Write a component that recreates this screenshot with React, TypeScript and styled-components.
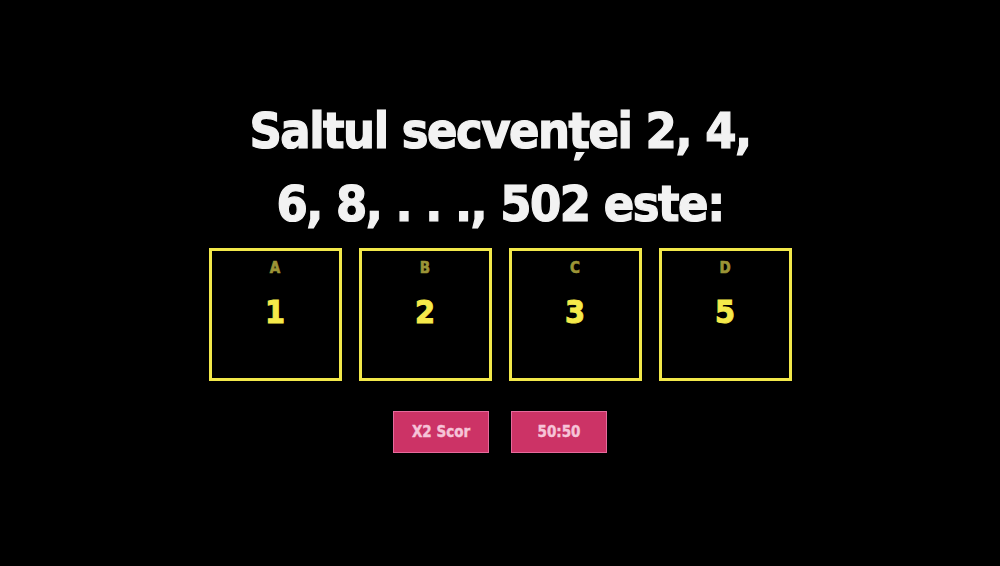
import styled, { createGlobalStyle } from "styled-components";

const GlobalStyle = createGlobalStyle`
  html, body {
    margin: 0;
    padding: 0;
    background: #000;
  }
  body {
    font-family: "DejaVu Sans Condensed", "DejaVu Sans", sans-serif;
  }
`;

const Screen = styled.div`
  width: 1000px;
  height: 566px;
  background: #000;
  display: flex;
  flex-direction: column;
  align-items: center;
  padding-top: 95px;
  box-sizing: border-box;
`;

const Question = styled.h1`
  margin: 0;
  color: #f2f2f2;
  font-family: "DejaVu Sans Condensed", "DejaVu Sans", sans-serif;
  font-weight: 700;
  font-size: 50px;
  line-height: 73px;
  letter-spacing: -1.5px;
  -webkit-text-stroke: 1.2px #f2f2f2;
  text-align: center;
`;

const Line = styled.span`
  display: block;
`;

const Answers = styled.div`
  display: flex;
  gap: 17px;
  margin-top: 7px;
`;

const AnswerBox = styled.div`
  width: 133px;
  height: 133px;
  box-sizing: border-box;
  border: 3.5px solid #f2e84a;
  display: flex;
  flex-direction: column;
  align-items: center;
  padding-top: 8px;
`;

const Letter = styled.span`
  color: #9b9436;
  font-weight: 700;
  font-size: 15px;
  line-height: 18px;
  -webkit-text-stroke: 0.6px #9b9436;
`;

const Value = styled.span`
  color: #f5ea4a;
  font-weight: 700;
  font-size: 32px;
  line-height: 40px;
  margin-top: 15px;
  -webkit-text-stroke: 1px #f5ea4a;
`;

const Lifelines = styled.div`
  display: flex;
  gap: 22px;
  margin-top: 30px;
`;

const Lifeline = styled.button`
  width: 96px;
  height: 42px;
  background: #cc3366;
  border: 1.5px solid #e66a9c;
  color: #f6c4d8;
  font-family: "DejaVu Sans Condensed", "DejaVu Sans", sans-serif;
  font-weight: 700;
  font-size: 15px;
  -webkit-text-stroke: 0.4px #f6c4d8;
  padding: 0;
  cursor: pointer;
`;

const answers = [
  { letter: "A", value: "1" },
  { letter: "B", value: "2" },
  { letter: "C", value: "3" },
  { letter: "D", value: "5" },
];

export default function App() {
  return (
    <>
      <GlobalStyle />
      <Screen>
        <Question>
          <Line>Saltul secvenței 2, 4,</Line>
          <Line>6, 8, . . ., 502 este:</Line>
        </Question>
        <Answers>
          {answers.map((a) => (
            <AnswerBox key={a.letter}>
              <Letter>{a.letter}</Letter>
              <Value>{a.value}</Value>
            </AnswerBox>
          ))}
        </Answers>
        <Lifelines>
          <Lifeline>X2 Scor</Lifeline>
          <Lifeline>50:50</Lifeline>
        </Lifelines>
      </Screen>
    </>
  );
}
